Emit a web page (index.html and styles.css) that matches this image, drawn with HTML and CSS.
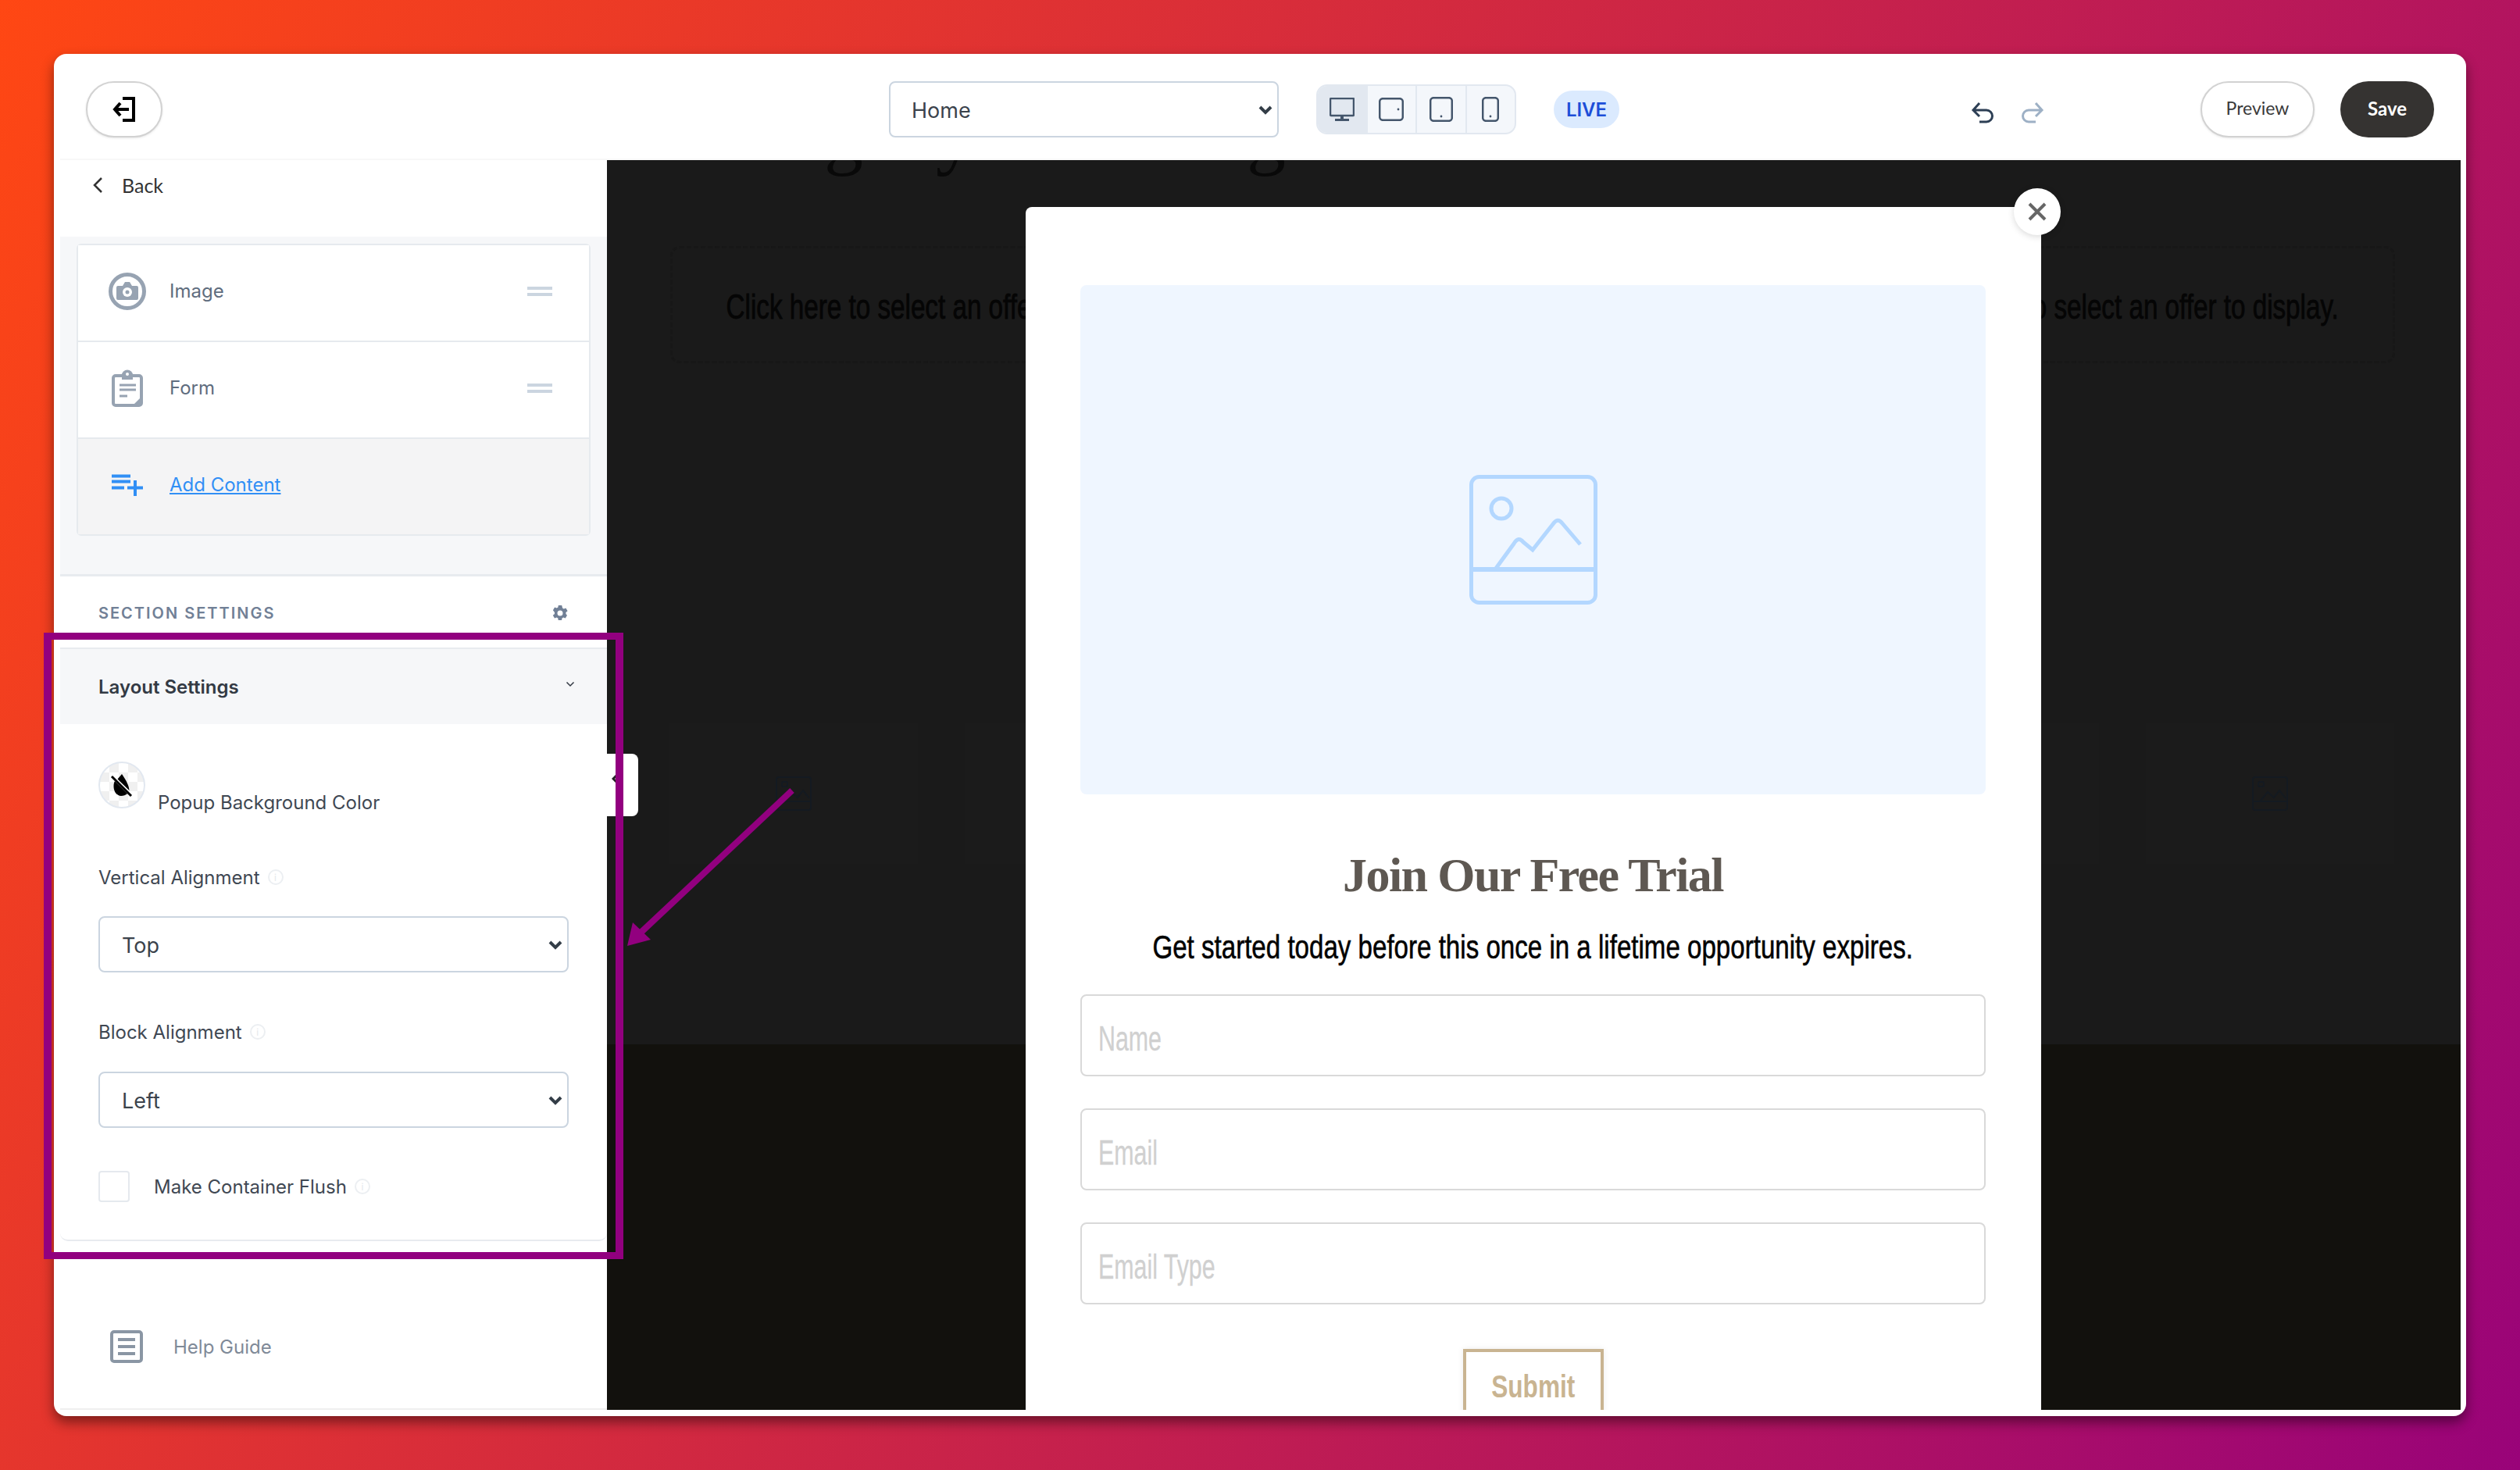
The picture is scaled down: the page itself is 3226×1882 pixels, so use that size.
FILE: index.html
```html
<!DOCTYPE html>
<html>
<head>
    <title>Popup Editor</title>
    <link rel="stylesheet" href="styles.css">
</head>
<body>
    <svg class="defs" width="0" height="0">
        <symbol id="select-arrow" viewBox="0 0 18 12"><path d="M2 2L9 9L16 2" fill="none" stroke="#333d47" stroke-width="4"/></symbol>
        <symbol id="ghost-icon" viewBox="0 0 46 44"><rect x="1" y="1" width="44" height="42" rx="3" fill="none" stroke="#141a21" stroke-width="2"/><rect x="8" y="7" width="7" height="6" rx="2" fill="none" stroke="#141a21" stroke-width="2"/><path d="M1 32H45M10 32L20 20L28 27L35 18L43 28" fill="none" stroke="#141a21" stroke-width="2"/></symbol>
    </svg>

    <div class="app">
        <header class="topbar">
            <button class="exit-btn">
                <svg class="exit-icon" viewBox="0 0 30 32"><path d="M13 2H27V30H13M3 16H21M10 8L3 16L10 24" fill="none" stroke="#000" stroke-width="4"/></svg>
            </button>
            <div class="select-wrap page-select-wrap">
                <select class="page-select"><option>Home</option></select>
                <svg class="arrow" width="18" height="12"><use href="#select-arrow"/></svg>
            </div>
            <div class="devices">
                <div class="device active">
                    <svg width="32" height="30" viewBox="0 0 32 30"><rect x="1" y="1" width="30" height="22" fill="none" stroke="#44566c" stroke-width="2.5" rx="1"/><path d="M14 23h4v4h-4zM7 27h18v3H7z" fill="#44566c"/></svg>
                </div>
                <div class="device">
                    <svg width="32" height="30" viewBox="0 0 32 30"><rect x="1.2" y="1.2" width="29.6" height="27.6" rx="4" fill="none" stroke="#44566c" stroke-width="2.5"/><circle cx="25" cy="15" r="1.4" fill="#44566c"/></svg>
                </div>
                <div class="device">
                    <svg width="30" height="32" viewBox="0 0 30 32"><rect x="1.2" y="1.2" width="27.6" height="29.6" rx="4" fill="none" stroke="#44566c" stroke-width="2.5"/><circle cx="15" cy="25" r="1.4" fill="#44566c"/></svg>
                </div>
                <div class="device">
                    <svg width="22" height="32" viewBox="0 0 22 32"><rect x="1.2" y="1.2" width="19.6" height="29.6" rx="4" fill="none" stroke="#44566c" stroke-width="2.5"/><circle cx="11" cy="25" r="1.4" fill="#44566c"/></svg>
                </div>
            </div>
            <span class="live-badge">LIVE</span>
            <div class="history">
                <svg width="30" height="28" viewBox="0 0 30 28"><path d="M11 2L3 11L11 19M3 11H20A7.500 7.500 0 0 1 20 26H11" fill="none" stroke="#2d3f55" stroke-width="3"/></svg>
                <svg width="30" height="28" viewBox="0 0 30 28"><path d="M19 2L27 11L19 19M27 11H10A7.500 7.500 0 0 0 10 26H19" fill="none" stroke="#9db0c5" stroke-width="3"/></svg>
            </div>
            <button class="preview-btn">Preview</button>
            <button class="save-btn">Save</button>
        </header>

        <div class="workspace">
            <aside class="sidebar">
                <div class="back-row">
                    <svg width="14" height="20" viewBox="0 0 14 20"><path d="M12 1L3 10L12 19" fill="none" stroke="#333" stroke-width="2.500"/></svg>
                    <span>Back</span>
                </div>

                <div class="content-list">
                    <div class="list-card">
                        <div class="list-row">
                            <svg class="row-icon" width="48" height="48" viewBox="0 0 48 48"><circle cx="24" cy="24" r="21.500" fill="none" stroke="#97a3b2" stroke-width="5"/><path d="M12 17h6l3-5h6l3 5h6a2 2 0 0 1 2 2v14a2 2 0 0 1-2 2H12a2 2 0 0 1-2-2V19a2 2 0 0 1 2-2z" fill="#97a3b2"/><circle cx="24" cy="25" r="6" fill="#fff"/><circle cx="24" cy="25" r="2.500" fill="#97a3b2"/></svg>
                            <span class="row-name">Image</span>
                            <span class="drag-handle"></span>
                        </div>
                        <div class="list-row">
                            <svg class="row-icon form-icon" width="40" height="48" viewBox="0 0 40 48"><rect x="2" y="8" width="36" height="38" rx="3" fill="none" stroke="#97a3b2" stroke-width="4"/><path d="M13 13V7a7 6.500 0 0 1 14 0v6z" fill="#97a3b2"/><circle cx="20" cy="6" r="2" fill="#fff"/><path d="M10 20H31M10 26H31M10 34H20" stroke="#97a3b2" stroke-width="3"/><path d="M37 36V45H28z" fill="#97a3b2"/></svg>
                            <span class="row-name">Form</span>
                            <span class="drag-handle"></span>
                        </div>
                        <div class="list-row add-row">
                            <svg class="row-icon form-icon" width="40" height="28" viewBox="0 0 40 28"><path d="M0 2.500H24M0 9.500H24M0 17.500H16M20 17.500H40M30 8V28" stroke="#318ff5" stroke-width="4" fill="none"/></svg>
                            <a class="add-link" href="#">Add Content</a>
                        </div>
                    </div>
                </div>

                <div class="section-head">
                    <span>SECTION SETTINGS</span>
                    <svg width="24" height="24" viewBox="0 0 24 24"><path d="M19.400 13a7.500 7.500 0 0 0 0-2l2.200-1.700-2.200-3.800-2.600 1a7.500 7.500 0 0 0-1.700-1L14.200 2H9.800l-.4 2.500a7.500 7.500 0 0 0-1.700 1l-2.600-1-2.200 3.800L5 11a7.500 7.500 0 0 0 0 2l-2.200 1.700 2.200 3.800 2.600-1a7.500 7.500 0 0 0 1.700 1l.4 2.500h4.400l.4-2.500a7.500 7.500 0 0 0 1.700-1l2.600 1 2.200-3.800zM12 15.500a3.500 3.500 0 1 1 0-7 3.500 3.500 0 0 1 0 7z" fill="#718096"/></svg>
                </div>

                <div class="panel">
                    <div class="panel-head">
                        <span>Layout Settings</span>
                        <svg class="panel-chevron" width="12" height="8" viewBox="0 0 12 8"><path d="M1.500 1.500L6 6L10.500 1.500" fill="none" stroke="#333a44" stroke-width="1.500"/></svg>
                    </div>
                    <div class="panel-body">
                        <div class="color-row">
                            <div class="swatch">
                                <svg width="30" height="30" viewBox="0 0 30 30"><path d="M15 1C19 7 24 14 24.500 22L9.500 7.500ZM6 10C3 15 4 28 14 29C17 29 20 28 22 26Z" fill="#000"/><path d="M2 4L27 29" stroke="#000" stroke-width="3"/></svg>
                            </div>
                            <span class="color-label">Popup Background Color</span>
                        </div>
                        <div class="field-label">Vertical Alignment <span class="info">i</span></div>
                        <div class="select-wrap field-select-wrap">
                            <select class="field-select"><option>Top</option></select>
                            <svg class="arrow" width="18" height="12"><use href="#select-arrow"/></svg>
                        </div>
                        <div class="field-label block-label">Block Alignment <span class="info">i</span></div>
                        <div class="select-wrap field-select-wrap left-select">
                            <select class="field-select"><option>Left</option></select>
                            <svg class="arrow" width="18" height="12"><use href="#select-arrow"/></svg>
                        </div>
                        <label class="check-row">
                            <span class="checkbox"></span>
                            <span>Make Container Flush</span>
                            <span class="info">i</span>
                        </label>
                    </div>
                </div>

                <div class="help-row">
                    <svg width="42" height="42" viewBox="0 0 42 42"><rect x="2" y="2" width="38" height="38" rx="3" fill="none" stroke="#8a96a4" stroke-width="4"/><path d="M10 12h22M10 21h22M10 30h22" stroke="#8a96a4" stroke-width="4"/></svg>
                    <span>Help Guide</span>
                </div>
            </aside>

            <div class="collapse-tab">
                <svg width="10" height="16" viewBox="0 0 10 16"><path d="M8 2L2 8L8 14" fill="none" stroke="#222" stroke-width="3"/></svg>
            </div>

            <main class="canvas">
                <div class="page-top">
                    <div class="ghost-heading"><span class="glyph-one">g</span><span class="glyph-two">y</span><span class="glyph-three">g</span></div>
                    <div class="offers">
                        <div class="offer-box"><span class="offer-text">Click here to select an offer to display.</span></div>
                        <div class="offer-box"><span class="offer-text">Click here to select an offer to display.</span></div>
                        <div class="offer-box"><span class="offer-text">Click here to select an offer to display.</span></div>
                    </div>
                    <div class="ghost-images">
                        <div class="ghost-image"><svg width="46" height="44"><use href="#ghost-icon"/></svg></div>
                        <div class="ghost-image"><svg width="46" height="44"><use href="#ghost-icon"/></svg></div>
                        <div class="ghost-image"><svg width="46" height="44"><use href="#ghost-icon"/></svg></div>
                        <div class="ghost-image"><svg width="46" height="44"><use href="#ghost-icon"/></svg></div>
                        <div class="ghost-image"><svg width="46" height="44"><use href="#ghost-icon"/></svg></div>
                        <div class="ghost-image"><svg width="46" height="44"><use href="#ghost-icon"/></svg></div>
                    </div>
                </div>
                <div class="page-bottom"></div>

                <div class="modal">
                    <div class="modal-image">
                        <svg width="164" height="166" viewBox="0 0 164 166"><rect x="2.500" y="2.500" width="159" height="161" rx="10" fill="none" stroke="#b3d7ff" stroke-width="5"/><path d="M2 121H162" stroke="#b3d7ff" stroke-width="6"/><circle cx="41" cy="43" r="13" fill="none" stroke="#b3d7ff" stroke-width="5"/><path d="M33 121L57 88Q63 78 69 86L81 96L107 63Q113 54 119 62L142 89" fill="none" stroke="#b3d7ff" stroke-width="5"/></svg>
                    </div>
                    <h2 class="modal-title">Join Our Free Trial</h2>
                    <p class="modal-text"><span class="modal-text-inner">Get started today before this once in a lifetime opportunity expires.</span></p>
                    <form class="modal-form">
                        <div class="modal-input"><span class="placeholder">Name</span></div>
                        <div class="modal-input"><span class="placeholder">Email</span></div>
                        <div class="modal-input"><span class="placeholder">Email Type</span></div>
                        <div class="submit-btn"><span class="submit-text">Submit</span></div>
                    </form>
                </div>
                <button class="modal-close">
                    <svg width="24" height="24" viewBox="0 0 24 24"><path d="M2 2L22 22M22 2L2 22" stroke="#666" stroke-width="4"/></svg>
                </button>
            </main>
        </div>
    </div>

    <!-- annotation drawn over the screenshot -->
    <div class="note-box"></div>
    <svg class="note-arrow" width="240" height="230" viewBox="0 0 240 230"><path d="M217 19L20 204" stroke="#92007f" stroke-width="8"/><path d="M6 218L13 188L36 210Z" fill="#92007f"/></svg>
</body>
</html>
```

FILE: styles.css
```css
* {
    box-sizing: border-box;
}

body {
    margin: 0;
    height: 100vh;
    padding: 69px;
    background: linear-gradient(120deg, #ff4713, #990379);
    font-family: Inter, Arial, sans-serif;
    overflow: hidden;
}

.defs {
    position: absolute;
}

.app {
    height: 100%;
    display: flex;
    flex-direction: column;
    padding: 0 7px 8px 8px;
    background-color: #fff;
    border-radius: 16px;
    box-shadow: 0 8px 16px rgba(0, 0, 0, 0.45);
}

/* top bar */
.topbar {
    height: 136px;
    flex: none;
    display: flex;
    align-items: center;
    padding-left: 33px;
    padding-top: 8px;
    border-bottom: 2px solid #f8f8f8;
}

.exit-btn {
    width: 98px;
    height: 72px;
    display: flex;
    align-items: center;
    justify-content: center;
    background: #fff;
    border: 2px solid #d2d2d2;
    border-radius: 36px;
    box-shadow: 0 1px 3px rgba(0, 0, 0, 0.1);
}

.exit-icon {
    width: 30px;
    height: 32px;
}

.select-wrap {
    position: relative;
}

.select-wrap .arrow {
    position: absolute;
    right: 8px;
    top: 31px;
    pointer-events: none;
}

.page-select-wrap {
    margin-left: 930px;
}

.page-select,
.field-select {
    appearance: none;
    display: block;
    height: 72px;
    padding-top: 2px;
    font-family: Inter, sans-serif;
    font-size: 27px;
    color: #3b434c;
    background-color: #fff;
    border: 2px solid #cbd5e0;
    border-radius: 8px;
}

.page-select {
    width: 499px;
    padding-left: 27px;
}

.devices {
    width: 256px;
    height: 64px;
    margin-left: 48px;
    display: flex;
    background-color: #f4f7fb;
    border: 2px solid #e2e8f0;
    border-radius: 14px;
    overflow: hidden;
}

.device {
    flex: 1;
    display: flex;
    align-items: center;
    justify-content: center;
    border-left: 2px solid #e2e8f0;
}

.device:first-child {
    border-left: 0;
}

.device.active {
    background-color: #e2e8f0;
}

.live-badge {
    width: 84px;
    height: 48px;
    margin-left: 48px;
    display: flex;
    align-items: center;
    justify-content: center;
    font-size: 24px;
    font-weight: 600;
    color: #1d4ed8;
    background-color: #dbeafe;
    border-radius: 24px;
}

.history {
    display: flex;
    gap: 34px;
    margin-left: 450px;
    margin-top: 8px;
}

.preview-btn,
.save-btn {
    height: 72px;
    padding: 0 0 4px;
    font-family: Lato, sans-serif;
    border-radius: 36px;
}

.preview-btn {
    width: 146px;
    margin-left: 200px;
    font-size: 23px;
    color: #3a3a3a;
    background-color: #fff;
    border: 2px solid #d2d2d2;
    box-shadow: 0 1px 3px rgba(0, 0, 0, 0.1);
}

.save-btn {
    width: 120px;
    margin-left: 33px;
    font-size: 24px;
    color: #fff;
    font-weight: 700;
    background-color: #353331;
    border: 0;
}

/* left panel */
.workspace {
    flex: 1;
    min-height: 0;
    display: flex;
    position: relative;
}

.sidebar {
    width: 700px;
    flex: none;
    display: flex;
    flex-direction: column;
    background-color: #fff;
}

.back-row {
    height: 98px;
    flex: none;
    display: flex;
    align-items: flex-start;
    gap: 24px;
    padding: 22px 0 0 41px;
    font-family: Lato, sans-serif;
    font-size: 25px;
    line-height: 20px;
    color: #333;
}

.content-list {
    height: 435px;
    flex: none;
    padding: 9px 21px 0;
    background-color: #f6f7f9;
    border-bottom: 3px solid #e8ebef;
}

.list-card {
    border: 2px solid #e6eaee;
    border-radius: 6px;
}

.list-row {
    height: 124px;
    display: flex;
    align-items: center;
    padding: 0 47px 5px 39px;
    background-color: #fff;
    border-top: 2px solid #e6eaee;
}

.list-row:first-child {
    border-top: 0;
    height: 122px;
}

.row-icon {
    flex: none;
}

.form-icon {
    margin: 0 4px;
}

.row-name {
    flex: 1;
    margin-left: 30px;
    font-size: 24px;
    color: #5f6d7e;
}

.drag-handle {
    width: 32px;
    height: 12px;
    border-top: 4px solid #cbd5e0;
    border-bottom: 4px solid #cbd5e0;
}

.add-row {
    background-color: #f4f4f5;
}

.add-link {
    margin-left: 30px;
    font-size: 24px;
    color: #318ff5;
}

.section-head {
    height: 91px;
    flex: none;
    display: flex;
    align-items: center;
    justify-content: space-between;
    padding: 2px 48px 0 49px;
    font-size: 20px;
    font-weight: 600;
    letter-spacing: 2px;
    color: #718096;
}

.panel {
    height: 760px;
    flex: none;
    border-top: 2px solid #e8ebef;
    border-bottom: 2px solid #e8ebef;
    border-radius: 0 0 10px 10px;
}

.panel-head {
    height: 96px;
    display: flex;
    align-items: center;
    justify-content: space-between;
    padding: 0 41px 0 49px;
    font-size: 24px;
    font-weight: 600;
    color: #333a44;
    background-color: #f6f7f9;
}

.panel-chevron {
    margin-bottom: 6px;
}

.panel-body {
    padding: 48px 49px 0;
}

.color-row {
    display: flex;
    align-items: flex-end;
    gap: 16px;
    height: 68px;
}

.swatch {
    width: 60px;
    height: 60px;
    display: flex;
    align-items: center;
    justify-content: center;
    margin-bottom: 8px;
    border: 2px solid #e2e8f0;
    border-radius: 50%;
    background-color: #fff;
    background-image: conic-gradient(#f0f0f0 25%, #fff 0 50%, #f0f0f0 0 75%, #fff 0);
    background-size: 24px 24px;
}

.color-label {
    font-size: 24px;
    line-height: 30px;
    color: #3f4853;
}

.field-label {
    display: flex;
    align-items: center;
    gap: 10px;
    height: 30px;
    margin-top: 65px;
    font-size: 24px;
    color: #3f4853;
}

.block-label {
    margin-top: 61px;
}

.info {
    width: 20px;
    height: 20px;
    display: flex;
    align-items: center;
    justify-content: center;
    font-size: 12px;
    color: #e4e8ec;
    border: 2px solid #eceff2;
    border-radius: 50%;
}

.field-select-wrap {
    margin-top: 35px;
}

.left-select {
    margin-top: 36px;
}

.field-select {
    width: 602px;
    padding-left: 28px;
}

.check-row {
    display: flex;
    align-items: center;
    margin-top: 55px;
    font-size: 24px;
    color: #3f4853;
}

.checkbox {
    width: 40px;
    height: 40px;
    margin-right: 31px;
    border: 2px solid #e5e9ee;
    border-radius: 4px;
}

.check-row .info {
    margin-left: 10px;
}

.help-row {
    flex: 1;
    display: flex;
    align-items: center;
    gap: 39px;
    padding-left: 64px;
    padding-top: 56px;
    font-size: 24px;
    color: #7f8a98;
    border-bottom: 2px solid #efefef;
}

.collapse-tab {
    position: absolute;
    left: 700px;
    top: 760px;
    z-index: 3;
    width: 40px;
    height: 80px;
    padding: 24px 0 0 6px;
    background-color: #fff;
    border-radius: 0 8px 8px 0;
}

/* page preview behind the popup */
.canvas {
    flex: 1;
    min-width: 0;
    position: relative;
    display: flex;
    flex-direction: column;
    overflow: hidden;
    background-color: #1a1a1a;
}

.page-top {
    height: 1132px;
    flex: none;
}

.page-bottom {
    flex: 1;
    background-color: #12110d;
}

.ghost-heading {
    height: 110px;
    margin-top: -88px;
    display: flex;
    font-family: "Liberation Serif", serif;
    font-size: 100px;
    line-height: 110px;
    color: #090909;
}

.glyph-one {
    margin-left: 278px;
}

.glyph-two {
    margin-left: 93px;
}

.glyph-three {
    margin-left: 348px;
}

.offers {
    display: flex;
    gap: 51px;
    margin: 88px 0 0 81px;
}

.offer-box {
    width: 702px;
    height: 150px;
    flex: none;
    display: flex;
    align-items: center;
    justify-content: center;
    padding-top: 6px;
    border: 3px dashed #171717;
    border-radius: 12px;
}

.offer-text {
    flex: none;
    white-space: nowrap;
    transform: scaleX(0.755);
    font-family: "Liberation Sans", sans-serif;
    font-size: 44px;
    color: #050505;
    -webkit-text-stroke: 0.8px #050505;
}

.ghost-images {
    display: flex;
    gap: 60px;
    margin: 461px 0 0 80px;
}

.ghost-image {
    width: 318px;
    height: 180px;
    flex: none;
    display: flex;
    align-items: center;
    justify-content: center;
    background-color: #1b1b1b;
}

.modal {
    position: absolute;
    left: 536px;
    top: 60px;
    width: 1300px;
    height: 1560px;
    padding: 100px 71px 0 70px;
    background-color: #fff;
    border-radius: 8px 8px 0 0;
}

.modal-image {
    height: 652px;
    display: flex;
    align-items: center;
    justify-content: center;
    background-color: #eff6ff;
    border-radius: 8px;
}

.modal-title {
    margin: 68px 0 0;
    text-align: center;
    font-family: "Liberation Serif", serif;
    font-size: 62px;
    line-height: 70px;
    font-weight: 700;
    letter-spacing: -1.6px;
    color: #5e5852;
}

.modal-text {
    margin: 31px 0 0;
    display: flex;
    justify-content: center;
    font-family: "Liberation Sans", sans-serif;
    font-size: 43px;
    line-height: 52px;
    color: #000;
}

.modal-text-inner {
    flex: none;
    white-space: nowrap;
    transform: scaleX(0.77);
    -webkit-text-stroke: 0.6px #000;
}

.modal-form {
    margin-top: 35px;
    display: flex;
    flex-direction: column;
    align-items: center;
    gap: 41px;
}

.modal-input {
    width: 100%;
    height: 105px;
    display: flex;
    align-items: center;
    padding: 8px 21px 0;
    border: 2px solid #d9d9d9;
    border-radius: 8px;
}

.placeholder {
    flex: none;
    transform: scaleX(0.69);
    transform-origin: left center;
    font-family: "Liberation Sans", sans-serif;
    font-size: 44px;
    color: #d0d0d0;
    -webkit-text-stroke: 0.3px #d0d0d0;
}

.submit-btn {
    width: 180px;
    height: 110px;
    margin-top: 16px;
    display: flex;
    justify-content: center;
    font-family: "Liberation Sans", sans-serif;
    font-size: 40px;
    line-height: 88px;
    font-weight: 700;
    color: #c9b491;
    border: 4px solid #c9b491;
    box-shadow: 0 0 8px rgba(0, 0, 0, 0.08);
}

.submit-text {
    flex: none;
    transform: scaleX(0.79);
}

.modal-close {
    position: absolute;
    left: 1801px;
    top: 36px;
    width: 60px;
    height: 60px;
    display: flex;
    align-items: center;
    justify-content: center;
    padding: 0;
    background-color: #fff;
    border: 0;
    border-radius: 50%;
    box-shadow: 0 2px 8px rgba(0, 0, 0, 0.15);
}

/* annotation */
.note-box {
    position: absolute;
    left: 56px;
    top: 810px;
    width: 742px;
    height: 802px;
    border-style: solid;
    border-width: 9px 10px;
    border-color: #92007f;
    z-index: 5;
}

.note-arrow {
    position: absolute;
    left: 797px;
    top: 993px;
    z-index: 5;
}
```
